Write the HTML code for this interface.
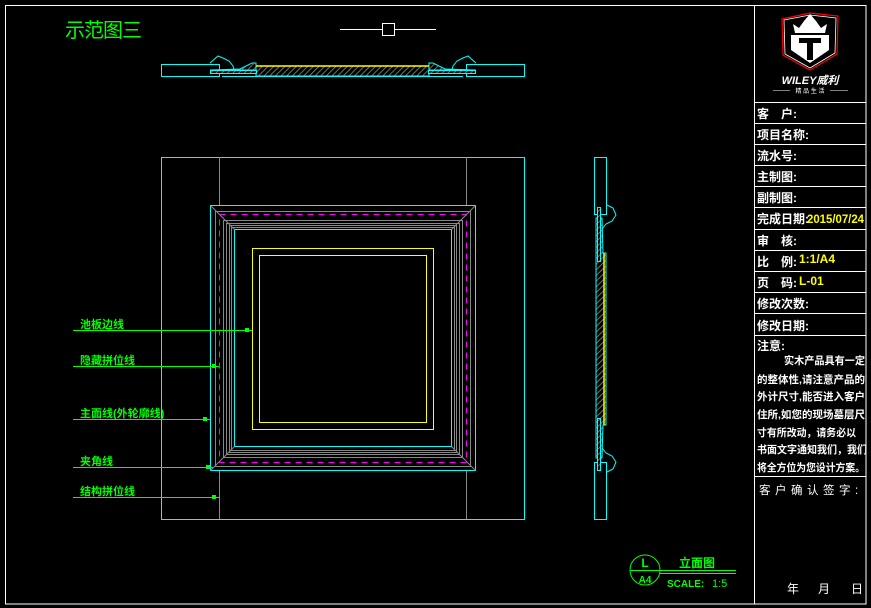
<!DOCTYPE html>
<html><head><meta charset="utf-8"><style>
html,body{margin:0;padding:0;background:#000;}
svg{display:block}
text{font-family:"Liberation Sans","Noto Sans CJK SC","WenQuanYi Zen Hei",sans-serif;}
</style></head><body>
<svg width="871" height="608" viewBox="0 0 871 608" xmlns="http://www.w3.org/2000/svg">
<defs>
<pattern id="h" width="4" height="4" patternUnits="userSpaceOnUse" patternTransform="rotate(45)">
<rect width="4" height="4" fill="#000"/><line x1="0" y1="0" x2="0" y2="4" stroke="#888" stroke-width="1.6"/>
</pattern>
</defs>
<rect x="0" y="0" width="871" height="608" fill="#000"/>
<rect x="5.5" y="5.5" width="860.5" height="598.5" fill="none" stroke="#fff" stroke-width="1"/>
<line x1="754.5" y1="5" x2="754.5" y2="604" stroke="#fff"/>
<text x="65" y="37" font-size="20" fill="#00ff00" textLength="77">示范图三</text>
<line x1="340" y1="29.5" x2="436" y2="29.5" stroke="#fff"/>
<rect x="382.5" y="23.5" width="12" height="12" fill="#000" stroke="#fff"/>
<rect x="161.5" y="64.5" width="58" height="12" fill="none" stroke="#0ff"/>
<rect x="466.5" y="64.5" width="58" height="12" fill="none" stroke="#0ff"/>
<path d="M222 76.5 H463" stroke="#0ff"/>
<rect x="256" y="66" width="173" height="10" fill="url(#h)" stroke="#0ff"/>
<path d="M210 70 H256 V63 L252 63 L240 69 Z" fill="url(#h)" stroke="#0ff"/>
<path d="M476 70 H429 V63 L433 63 L445 69 Z" fill="url(#h)" stroke="#0ff"/>
<rect x="210.5" y="70.5" width="46" height="3" fill="url(#h)" stroke="#0ff"/>
<rect x="428.5" y="70.5" width="47" height="3" fill="url(#h)" stroke="#0ff"/>
<path d="M210 63 L218 56 L223 58 L229 61 L233 66 L234 70" fill="none" stroke="#0ff"/>
<path d="M476 63 L468 56 L463 58 L457 61 L453 66 L452 70" fill="none" stroke="#0ff"/>
<line x1="256" y1="66" x2="429" y2="66" stroke="#ff0" stroke-width="1.5"/>
<rect x="161.5" y="157.5" width="363" height="362" fill="none" stroke="#0ff"/>
<line x1="219.5" y1="157" x2="219.5" y2="206" stroke="#888"/>
<line x1="466.5" y1="157" x2="466.5" y2="206" stroke="#888"/>
<line x1="219.5" y1="470" x2="219.5" y2="519" stroke="#888"/>
<line x1="466.5" y1="470" x2="466.5" y2="519" stroke="#888"/>
<rect x="210.5" y="205.5" width="265" height="265" fill="none" stroke="#0ff"/>
<rect x="215.5" y="211.5" width="255" height="255" fill="none" stroke="#888"/>
<rect x="219.5" y="214.5" width="247" height="248" fill="none" stroke="#f0f" stroke-dasharray="6,5"/>
<rect x="223.5" y="220.5" width="239" height="237" fill="none" stroke="#888"/>
<rect x="226.5" y="223.5" width="233" height="231" fill="none" stroke="#888"/>
<rect x="229.5" y="225.5" width="227" height="227" fill="none" stroke="#888"/>
<rect x="231.5" y="227.5" width="223" height="223" fill="none" stroke="#888"/>
<rect x="234.5" y="229.5" width="217" height="217" fill="none" stroke="#0ff"/>
<path d="M210.5 205.5 L234.5 229.5 M475.5 205.5 L451.5 229.5 M210.5 470.5 L234.5 446.5 M475.5 470.5 L451.5 446.5" stroke="#888"/>
<rect x="252.5" y="248.5" width="181" height="181" fill="none" stroke="#ff0"/>
<rect x="259.5" y="255.5" width="167" height="167" fill="none" stroke="#ff0"/>
<g fill="#00ff00" font-size="11" font-weight="bold">
<text x="80" y="328">池板边线</text>
<text x="80" y="364">隐藏拼位线</text>
<text x="80" y="417">主面线(外轮廓线)</text>
<text x="80" y="465">夹角线</text>
<text x="80" y="495">结构拼位线</text>
</g>
<g stroke="#00ff00">
<line x1="73" y1="330.5" x2="252" y2="330.5"/>
<line x1="73" y1="366.5" x2="219" y2="366.5"/>
<line x1="73" y1="419.5" x2="210" y2="419.5"/>
<line x1="73" y1="467.5" x2="213" y2="467.5"/>
<line x1="73" y1="497.5" x2="219" y2="497.5"/>
</g>
<g fill="#00ff00">
<rect x="245" y="328" width="4" height="4"/><rect x="212" y="364" width="4" height="4"/>
<rect x="203" y="417" width="4" height="4"/><rect x="206" y="465" width="4" height="4"/>
<rect x="212" y="495" width="4" height="4"/>
</g>
<rect x="594.5" y="157.5" width="12" height="57" fill="none" stroke="#0ff"/>
<rect x="594.5" y="462.5" width="12" height="57" fill="none" stroke="#0ff"/>
<path d="M596 218 H602 L603 253 H606 V425 H603 L602 458 H596 Z" fill="url(#h)" stroke="#0ff"/>
<rect x="597.5" y="207.5" width="3" height="54" fill="url(#h)" stroke="#0ff"/>
<rect x="597.5" y="418.5" width="3" height="52" fill="url(#h)" stroke="#0ff"/>
<path d="M607 205 L613 208 L616 215 L612 221 L606 224 L602 229" fill="none" stroke="#0ff"/>
<path d="M607 472 L613 469 L616 462 L612 456 L606 453 L602 448" fill="none" stroke="#0ff"/>
<line x1="604" y1="253" x2="604" y2="425" stroke="#ff0" stroke-width="1.5"/>
<circle cx="645" cy="570" r="15" fill="none" stroke="#00ff00"/>
<line x1="630" y1="570.5" x2="736" y2="570.5" stroke="#00ff00"/>
<line x1="660" y1="573.5" x2="736" y2="573.5" stroke="#00ff00"/>
<text x="645" y="567" font-size="12" fill="#00ff00" text-anchor="middle" font-weight="bold">L</text>
<text x="645" y="583" font-size="10" fill="#00ff00" text-anchor="middle" font-weight="bold">A4</text>
<text x="679" y="567" font-size="12" fill="#00ff00" font-weight="bold">立面图</text>
<text x="667" y="587" font-size="10" fill="#00ff00" font-weight="bold" font-family="Liberation Serif">SCALE:</text>
<text x="712" y="587" font-size="11" fill="#00ff00" font-family="Liberation Serif">1:5</text>
<g stroke="#fff">
<line x1="754" y1="102.5" x2="866" y2="102.5"/>
<line x1="754" y1="123.5" x2="866" y2="123.5"/>
<line x1="754" y1="144.5" x2="866" y2="144.5"/>
<line x1="754" y1="165.5" x2="866" y2="165.5"/>
<line x1="754" y1="186.5" x2="866" y2="186.5"/>
<line x1="754" y1="207.5" x2="866" y2="207.5"/>
<line x1="754" y1="229.5" x2="866" y2="229.5"/>
<line x1="754" y1="250.5" x2="866" y2="250.5"/>
<line x1="754" y1="271.5" x2="866" y2="271.5"/>
<line x1="754" y1="292.5" x2="866" y2="292.5"/>
<line x1="754" y1="313.5" x2="866" y2="313.5"/>
<line x1="754" y1="335.5" x2="866" y2="335.5"/>
<line x1="754" y1="476.5" x2="866" y2="476.5"/>
</g>
<path d="M782 19 L810 13 L838 16 L837 54 L810 70 L783 55 Z" fill="none" stroke="#f00" stroke-width="1.2"/>
<path d="M784 20 L810 15 L836 18 L835 53 L810 68 L785 54 Z" fill="none" stroke="#fff" stroke-width="0.8"/>
<path d="M793 24 L799 28 L804 21 L810 14 L816 21 L821 28 L827 24 L825 33 H795 Z" fill="#fff"/>
<path d="M791 35 H829 V50 L810 63 L791 50 Z" fill="#fff"/>
<path d="M799 38 H821 V43 H813 V60 H807 V43 H799 Z" fill="#000"/>
<text x="810" y="84" font-size="11" fill="#fff" text-anchor="middle" font-weight="bold" font-style="italic">WILEY威利</text>
<line x1="773" y1="90.5" x2="848" y2="90.5" stroke="#fff" stroke-width="0.6"/>
<rect x="790" y="87" width="40" height="6" fill="#000"/>
<text x="810" y="93" font-size="6" fill="#fff" text-anchor="middle">精 品 生 活</text>
<g fill="#fff" font-size="12" font-weight="bold">
<text x="757" y="118">客　户:</text>
<text x="757" y="139">项目名称:</text>
<text x="757" y="160">流水号:</text>
<text x="757" y="181">主制图:</text>
<text x="757" y="202">副制图:</text>
<text x="757" y="223">完成日期:</text>
<text x="757" y="245">审　核:</text>
<text x="757" y="266">比　例:</text>
<text x="757" y="287">页　码:</text>
<text x="757" y="308">修改次数:</text>
<text x="757" y="330">修改日期:</text>
<text x="757" y="350">注意:</text>
</g>
<g fill="#ff0" font-size="12" font-weight="bold" font-family="Liberation Serif">
<text x="807" y="223" textLength="57" lengthAdjust="spacingAndGlyphs">2015/07/24</text>
<text x="799" y="263">1:1/A4</text>
<text x="799" y="285">L-01</text>
</g>
<g fill="#fff" font-size="10.5" font-weight="bold">
<text x="784" y="364" textLength="81" lengthAdjust="spacingAndGlyphs">实木产品具有一定</text>
<text x="757" y="383" textLength="108" lengthAdjust="spacingAndGlyphs">的整体性,请注意产品的</text>
<text x="757" y="400" textLength="108" lengthAdjust="spacingAndGlyphs">外计尺寸,能否进入客户</text>
<text x="757" y="418" textLength="108" lengthAdjust="spacingAndGlyphs">住所,如您的现场墓层尺</text>
<text x="757" y="436" textLength="99" lengthAdjust="spacingAndGlyphs">寸有所改动，请务必以</text>
<text x="757" y="453" textLength="110" lengthAdjust="spacingAndGlyphs">书面文字通知我们，我们</text>
<text x="757" y="471" textLength="108" lengthAdjust="spacingAndGlyphs">将全方位为您设计方案。</text>
</g>
<text x="759" y="494" font-size="11.5" fill="#fff" letter-spacing="4.5">客户确认签字:</text>
<g fill="#fff" font-size="12">
<text x="787" y="593">年</text>
<text x="818" y="593">月</text>
<text x="851" y="593">日</text>
</g>
</svg>
</body></html>
